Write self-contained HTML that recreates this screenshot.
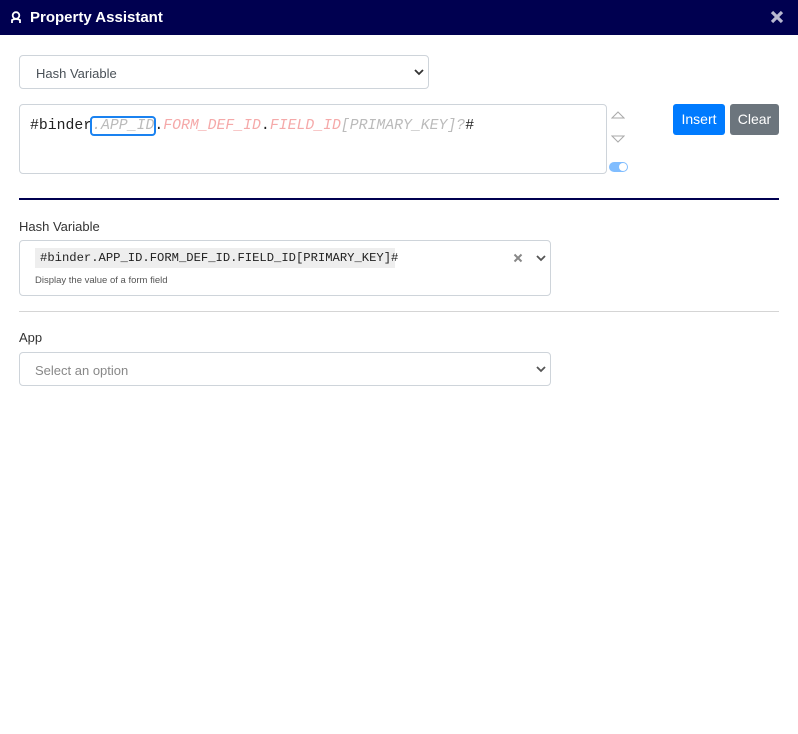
<!DOCTYPE html>
<html><head><style>
body{margin:0;width:798px;height:734px;background:#fff;font-family:"Liberation Sans",sans-serif;position:relative;overflow:hidden}
.a{position:absolute}
.hdr{left:0;top:0;width:798px;height:35px;background:#000050;color:#fff}
.mono{font-family:"Liberation Mono",monospace}
.box{border:1px solid #ced4da;border-radius:4px;box-sizing:border-box;background:#fff}
</style></head><body>
<div class="a hdr">
 <svg class="a" style="left:10px;top:11px" width="12" height="13" viewBox="0 0 12 13"><circle cx="6" cy="4.5" r="3.3" fill="none" stroke="#fff" stroke-width="1.8"/><path d="M2 12 L2 9 Q6 7 10 9 L10 12" fill="none" stroke="#fff" stroke-width="1.8"/></svg>
 <div class="a" style="left:30px;top:9px;font-size:15px;font-weight:bold">Property Assistant</div>
 <svg class="a" style="left:770px;top:10px" width="14" height="14" viewBox="0 0 14 14"><path d="M2 2L12 12M12 2L2 12" stroke="#b8b8d0" stroke-width="3.2"/></svg>
</div>
<div class="a box" style="left:19px;top:55px;width:410px;height:34px;font-size:13px;color:#495057;padding:10px 0 0 16px">Hash Variable</div>
<svg class="a" style="left:414px;top:68px" width="10" height="8" viewBox="0 0 10 8"><path d="M1 2L5 6L9 2" fill="none" stroke="#333" stroke-width="1.8"/></svg>
<div class="a box" style="left:19px;top:104px;width:588px;height:70px"></div>
<div class="a mono" style="left:30px;top:118px;font-size:14.8px;white-space:pre;color:#222">#binder<span style="color:#bbb;font-style:italic;outline:2px solid #1a82f0;border-radius:2px">.APP_ID</span>.<span style="color:#f5a9a9;font-style:italic">FORM_DEF_ID</span>.<span style="color:#f5a9a9;font-style:italic">FIELD_ID</span><span style="color:#bbb;font-style:italic">[PRIMARY_KEY]?</span>#</div>
<svg class="a" style="left:611px;top:110px" width="14" height="36" viewBox="0 0 14 36"><path d="M1 8L7 2L13 8Z M1 26L7 32L13 26Z" fill="none" stroke="#aaa" stroke-width="1"/></svg>
<div class="a" style="left:609px;top:162px;width:19px;height:10px;border-radius:5px;background:#80bdff"><div class="a" style="left:10px;top:1px;width:8px;height:8px;border-radius:4px;background:#fff"></div></div>
<div class="a" style="left:673px;top:104px;width:52px;height:31px;background:#007bff;border-radius:3px;color:#fff;font-size:14px;text-align:center;line-height:31px">Insert</div>
<div class="a" style="left:730px;top:104px;width:49px;height:31px;background:#6c757d;border-radius:3px;color:#fff;font-size:14px;text-align:center;line-height:31px">Clear</div>
<div class="a" style="left:19px;top:198px;width:760px;height:2px;background:#000050"></div>
<div class="a" style="left:19px;top:219px;font-size:13px;color:#333">Hash Variable</div>
<div class="a box" style="left:19px;top:240px;width:532px;height:56px"></div>
<div class="a mono" style="left:35px;top:248px;width:360px;height:20px;background:#eee;font-size:12.2px;line-height:20px;padding-left:5px;box-sizing:border-box;color:#222">#binder.APP_ID.FORM_DEF_ID.FIELD_ID[PRIMARY_KEY]#</div>
<div class="a" style="left:35px;top:275px;font-size:9.5px;color:#555">Display the value of a form field</div>
<svg class="a" style="left:513px;top:253px" width="10" height="10" viewBox="0 0 10 10"><path d="M1.5 1.5L8.5 8.5M8.5 1.5L1.5 8.5" stroke="#888" stroke-width="2"/></svg>
<svg class="a" style="left:536px;top:254px" width="10" height="8" viewBox="0 0 10 8"><path d="M1 2L5 6L9 2" fill="none" stroke="#555" stroke-width="1.8"/></svg>
<div class="a" style="left:19px;top:311px;width:760px;height:1px;background:#d5d5d5"></div>
<div class="a" style="left:19px;top:330px;font-size:13px;color:#333">App</div>
<div class="a box" style="left:19px;top:352px;width:532px;height:34px;font-size:13px;color:#888;padding:10px 0 0 15px">Select an option</div>
<svg class="a" style="left:536px;top:365px" width="10" height="8" viewBox="0 0 10 8"><path d="M1 2L5 6L9 2" fill="none" stroke="#555" stroke-width="1.8"/></svg>
</body></html>
